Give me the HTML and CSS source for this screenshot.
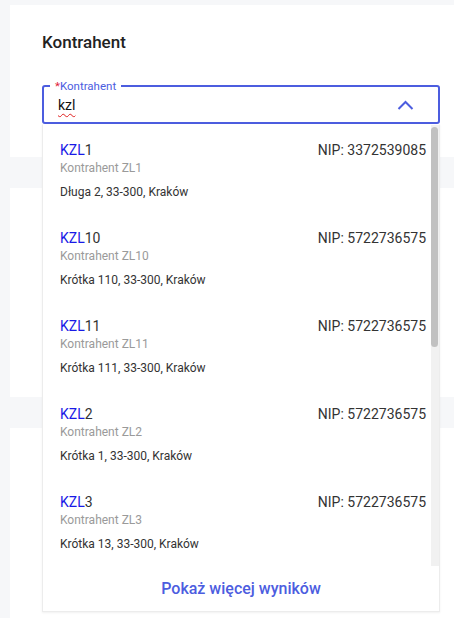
FILE: index.html
```html
<!DOCTYPE html>
<html lang="pl">
<head>
<meta charset="utf-8">
<title>Kontrahent</title>
<link rel="stylesheet" href="styles.css">
</head>
<body>
<main class="page">
  <section class="card card-first">
    <h2 class="card-title">Kontrahent</h2>
    <div class="field">
      <span class="field-label"><span class="req">*</span>Kontrahent</span>
      <span class="field-value">kzl</span>
      <svg class="chevron" width="17" height="10" viewBox="0 0 17 10"><polyline points="1.5,9 8.5,2 15.5,9" fill="none" stroke="#4c5ddf" stroke-width="2"/></svg>
      <div class="dropdown">
        <div class="results-wrap">
          <ul class="results">
            <li class="result"><div class="result-top"><span class="code"><b>KZL</b>1</span><span class="nip">NIP: 3372539085</span></div><div class="result-name">Kontrahent ZL1</div><div class="result-addr">Długa 2, 33-300, Kraków</div></li>
            <li class="result"><div class="result-top"><span class="code"><b>KZL</b>10</span><span class="nip">NIP: 5722736575</span></div><div class="result-name">Kontrahent ZL10</div><div class="result-addr">Krótka 110, 33-300, Kraków</div></li>
            <li class="result"><div class="result-top"><span class="code"><b>KZL</b>11</span><span class="nip">NIP: 5722736575</span></div><div class="result-name">Kontrahent ZL11</div><div class="result-addr">Krótka 111, 33-300, Kraków</div></li>
            <li class="result"><div class="result-top"><span class="code"><b>KZL</b>2</span><span class="nip">NIP: 5722736575</span></div><div class="result-name">Kontrahent ZL2</div><div class="result-addr">Krótka 1, 33-300, Kraków</div></li>
            <li class="result"><div class="result-top"><span class="code"><b>KZL</b>3</span><span class="nip">NIP: 5722736575</span></div><div class="result-name">Kontrahent ZL3</div><div class="result-addr">Krótka 13, 33-300, Kraków</div></li>
          </ul>
          <div class="scrollbar"><div class="thumb"></div></div>
        </div>
        <div class="more">Pokaż więcej wyników</div>
      </div>
    </div>
  </section>
  <section class="card card-second"></section>
  <section class="card card-third"></section>
</main>
</body>
</html>
```
FILE: styles.css
```css
html, body {
  margin: 0;
  padding: 0;
}
body {
  background: #f6f7f9;
  font-family: Roboto, "Noto Sans", "Liberation Sans", sans-serif;
  color: #333;
  overflow: hidden;
}
.page {
  display: flex;
  flex-direction: column;
  gap: 31px;
  padding: 5px 0 0 10px;
}
.card {
  background: #fff;
}
.card-first {
  padding: 25px 14px 33px 32px;
}
.card-second {
  height: 209px;
}
.card-third {
  height: 190px;
}
.card-title {
  margin: 0 0 31px;
  font-size: 17px;
  line-height: 24px;
  font-weight: 500;
  color: #222;
}
.field {
  position: relative;
  box-sizing: border-box;
  height: 39px;
  border: 2px solid #4c5ddf;
  border-radius: 3px;
  display: flex;
  align-items: center;
  justify-content: space-between;
  padding: 0 24px 0 14px;
}
.field-label {
  position: absolute;
  top: -8px;
  left: 6px;
  padding: 0 5px;
  background: #fff;
  font-size: 11.5px;
  line-height: 14px;
  color: #4c5ddf;
}
.req {
  color: #e0203a;
}
.field-value {
  font-size: 14px;
  line-height: 20px;
  color: #111;
  text-decoration: underline wavy #e02020;
  text-decoration-thickness: 1px;
  text-underline-offset: 3px;
}
.chevron {
  display: block;
}
.dropdown {
  position: absolute;
  top: calc(100% + 2px);
  left: -2px;
  right: -2px;
  z-index: 5;
  background: #fff;
  border: 1px solid #ececec;
  border-top: 1px solid #fff;
  box-shadow: 0 1px 2px rgba(0, 0, 0, 0.06);
}
.results-wrap {
  display: flex;
  height: 441px;
}
.results {
  flex: 1;
  list-style: none;
  margin: 0;
  padding: 0;
  overflow: hidden;
}
.scrollbar {
  width: 8px;
  box-sizing: border-box;
  padding: 2px 1px 0 0;
  background: #f1f1f1;
}
.thumb {
  height: 220px;
  background: #c1c1c1;
  border-radius: 4px;
}
.result {
  padding: 15px 5px 13px 17px;
}
.result-top {
  display: flex;
  justify-content: space-between;
  font-size: 14px;
  line-height: 20px;
  color: #333;
}
.code b {
  font-weight: 400;
  color: #1a1ae6;
}
.result-name {
  font-size: 12px;
  line-height: 16px;
  color: #9a9a9a;
}
.result-addr {
  margin-top: 8px;
  font-size: 12px;
  line-height: 16px;
  color: #333;
}
.more {
  height: 45px;
  display: flex;
  align-items: center;
  justify-content: center;
  font-size: 16px;
  font-weight: 500;
  color: #4c5ddf;
}
```
